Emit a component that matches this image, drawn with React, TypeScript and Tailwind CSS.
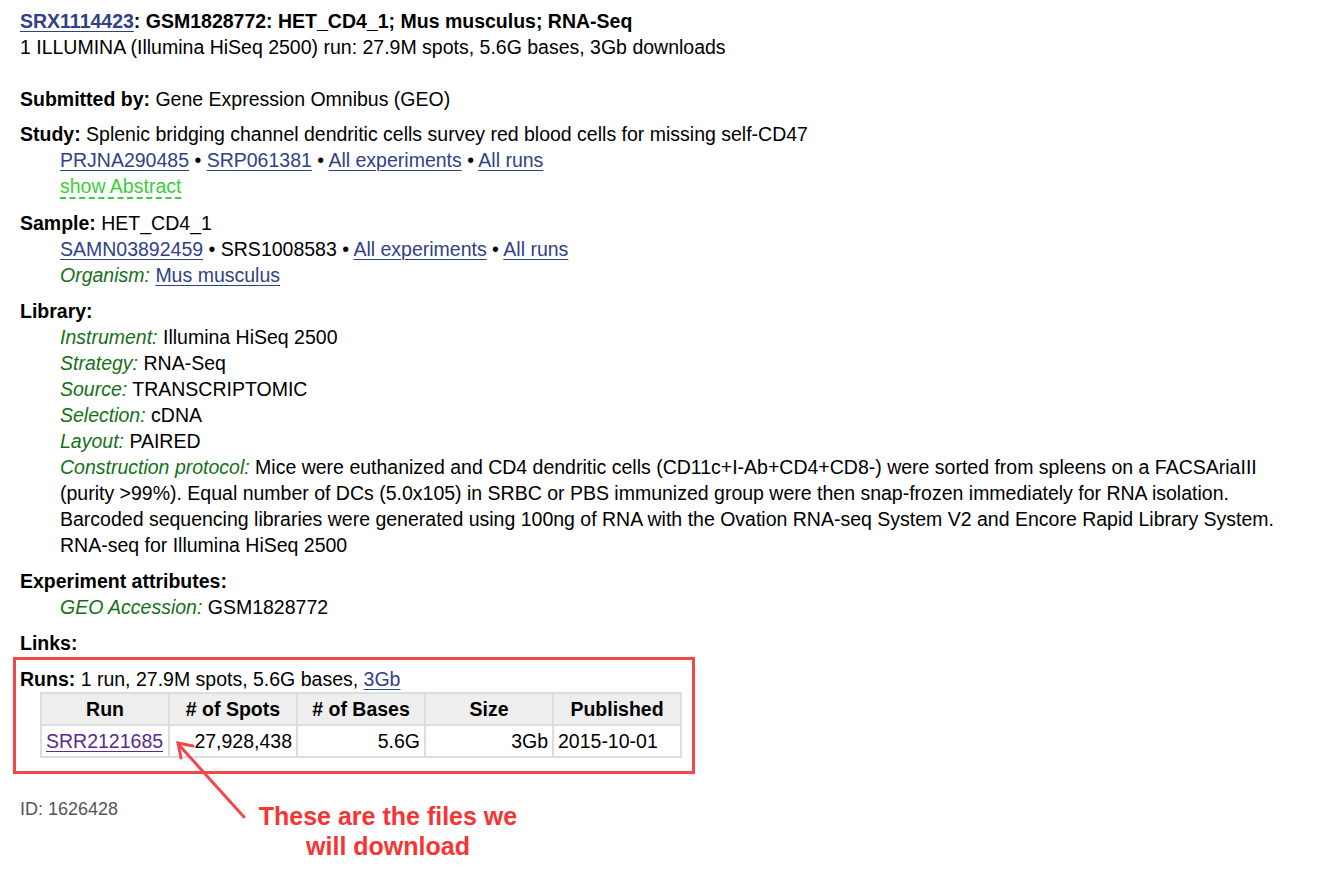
const link = "text-[#2f4287] underline decoration-1 underline-offset-[3px]";

function Label({ children }: { children: React.ReactNode }) {
  return <em className="text-[#16701a]">{children}</em>;
}

function Dot() {
  return <span> • </span>;
}

export default function App() {
  return (
    <div
      className="relative min-h-[878px] w-full bg-white px-5 pt-2 text-[19.5px] leading-[26px] text-black"
      style={{ fontFamily: '"Liberation Sans", Arial, Helvetica, sans-serif' }}
    >
      <div className="font-bold">
        <a className={link}>SRX1114423</a>: GSM1828772: HET_CD4_1; Mus musculus; RNA-Seq
      </div>
      <div>1 ILLUMINA (Illumina HiSeq 2500) run: 27.9M spots, 5.6G bases, 3Gb downloads</div>

      <div className="mt-[26px]">
        <b>Submitted by:</b> Gene Expression Omnibus (GEO)
      </div>

      <div className="mt-[9px]">
        <div>
          <b>Study:</b> Splenic bridging channel dendritic cells survey red blood cells for missing self-CD47
        </div>
        <div className="pl-10">
          <div>
            <a className={link}>PRJNA290485</a>
            <Dot />
            <a className={link}>SRP061381</a>
            <Dot />
            <a className={link}>All experiments</a>
            <Dot />
            <a className={link}>All runs</a>
          </div>
          <div>
            <span className="border-b-2 border-dashed border-[#3ccc3c] text-[#3ccc3c]">show Abstract</span>
          </div>
        </div>
      </div>

      <div className="mt-[11px]">
        <div>
          <b>Sample:</b> HET_CD4_1
        </div>
        <div className="pl-10">
          <div>
            <a className={link}>SAMN03892459</a>
            <Dot />
            SRS1008583
            <Dot />
            <a className={link}>All experiments</a>
            <Dot />
            <a className={link}>All runs</a>
          </div>
          <div>
            <Label>Organism:</Label> <a className={link}>Mus musculus</a>
          </div>
        </div>
      </div>

      <div className="mt-[10px]">
        <b>Library:</b>
        <div className="pl-10">
          <div>
            <Label>Instrument:</Label> Illumina HiSeq 2500
          </div>
          <div>
            <Label>Strategy:</Label> RNA-Seq
          </div>
          <div>
            <Label>Source:</Label> TRANSCRIPTOMIC
          </div>
          <div>
            <Label>Selection:</Label> cDNA
          </div>
          <div>
            <Label>Layout:</Label> PAIRED
          </div>
          <div>
            <Label>Construction protocol:</Label> Mice were euthanized and CD4 dendritic cells (CD11c+I-Ab+CD4+CD8-) were
            sorted from spleens on a FACSAriaIII (purity &gt;99%). Equal number of DCs (5.0x105) in SRBC or PBS immunized
            group were then snap-frozen immediately for RNA isolation. Barcoded sequencing libraries were generated using
            100ng of RNA with the Ovation RNA-seq System V2 and Encore Rapid Library System. RNA-seq for Illumina HiSeq 2500
          </div>
        </div>
      </div>

      <div className="mt-[10px]">
        <b>Experiment attributes:</b>
        <div className="pl-10">
          <Label>GEO Accession:</Label> GSM1828772
        </div>
      </div>

      <div className="mt-[10px]">
        <b>Links:</b>
      </div>

      <div className="-ml-[7px] mt-[1px] w-[682px] border-[3px] border-[#f44848] pb-[13px] pl-1 pt-[6px]">
        <div>
          <b>Runs:</b> 1 run, 27.9M spots, 5.6G bases, <a className={link}>3Gb</a>
        </div>
        <table className="ml-5 w-[642px] table-fixed border-collapse border-2 border-[#dddddd]">
          <thead>
            <tr className="bg-[#eeeeee]">
              {["Run", "# of Spots", "# of Bases", "Size", "Published"].map((h) => (
                <th key={h} className="border-2 border-[#dddddd] px-1 py-[2px] text-center font-bold">
                  {h}
                </th>
              ))}
            </tr>
          </thead>
          <tbody>
            <tr>
              <td className="border-2 border-[#dddddd] px-1 py-[2px] text-left">
                <a className="text-[#5b2a8a] underline decoration-1 underline-offset-[3px]">SRR2121685</a>
              </td>
              <td className="border-2 border-[#dddddd] px-1 py-[2px] text-right">27,928,438</td>
              <td className="border-2 border-[#dddddd] px-1 py-[2px] text-right">5.6G</td>
              <td className="border-2 border-[#dddddd] px-1 py-[2px] text-right">3Gb</td>
              <td className="border-2 border-[#dddddd] px-1 py-[2px] text-left">2015-10-01</td>
            </tr>
          </tbody>
        </table>
      </div>

      <div className="mt-[22px] text-[18px] text-[#555555]">ID: 1626428</div>

      {/* annotation arrow + note */}
      <svg className="pointer-events-none absolute left-0 top-0" width="1318" height="878">
        <g stroke="#f44848" strokeWidth="3" strokeLinecap="round" fill="none">
          <line x1="244" y1="817" x2="179" y2="745" />
          <polyline points="193,746 178,743 181,758" />
        </g>
      </svg>
      <div className="absolute left-[238px] top-[801px] w-[300px] text-center text-[25px] font-bold leading-[30px] text-[#f63434]">
        These are the files we
        <br />
        will download
      </div>
    </div>
  );
}
